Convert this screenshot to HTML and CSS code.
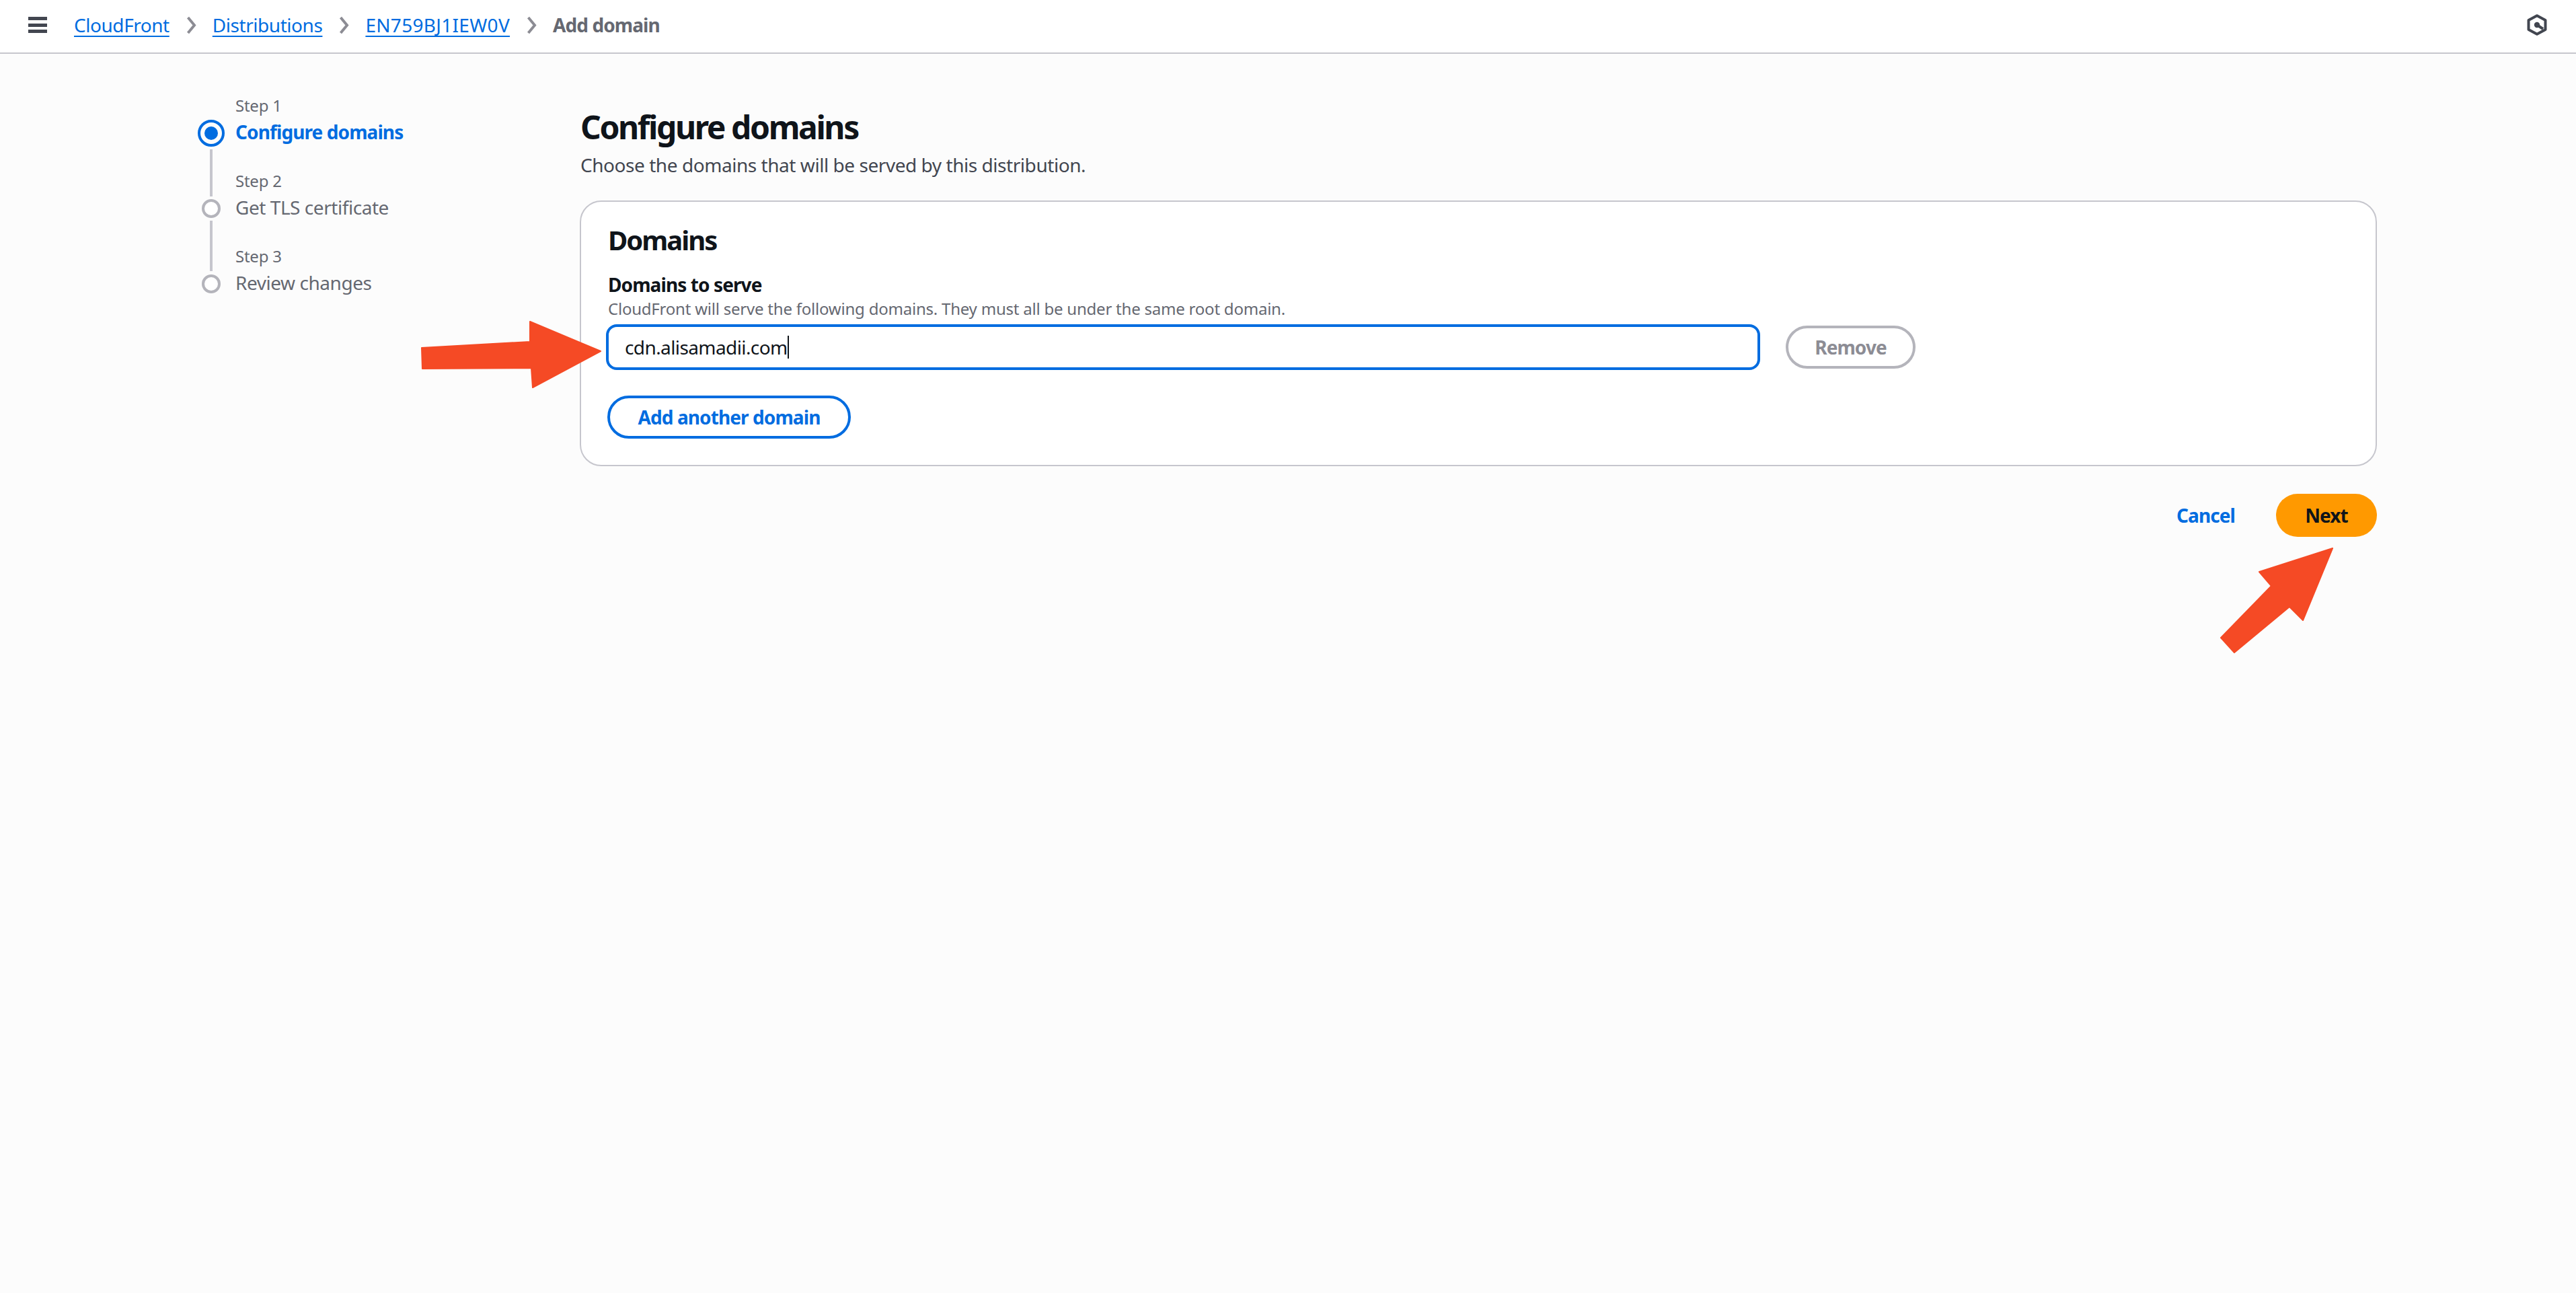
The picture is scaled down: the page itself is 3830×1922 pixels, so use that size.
FILE: index.html
```html
<!DOCTYPE html>
<html lang="en">
<head>
<meta charset="utf-8">
<title>Add domain</title>
<link rel="stylesheet" href="styles.css">
</head>
<body>
<header class="topbar">
  <button class="menu" aria-label="Menu"><span></span><span></span><span></span></button>
  <nav class="crumbs">
    <a href="#">CloudFront</a>
    <svg class="chev" viewBox="0 0 15 27"><path d="M2.500 2l9.500 11.500-9.500 11.500" /></svg>
    <a href="#">Distributions</a>
    <svg class="chev" viewBox="0 0 15 27"><path d="M2.500 2l9.500 11.500-9.500 11.500" /></svg>
    <a class="crumb-id" href="#">EN759BJ1IEW0V</a>
    <svg class="chev" viewBox="0 0 15 27"><path d="M2.500 2l9.500 11.500-9.500 11.500" /></svg>
    <span class="current">Add domain</span>
  </nav>
  <svg class="hex" viewBox="0 0 30 32"><path class="hex-o" d="M15 2.2L27.5 9v14L15 29.8 2.500 23V9z"/><path class="hex-l" d="M15 16l9 6"/><circle class="hex-d" cx="15" cy="16" r="4.200"/></svg>
</header>

<main class="page">
  <ol class="steps">
    <li class="step step-active">
      <span class="step-no">Step 1</span>
      <span class="dot dot-active"></span>
      <span class="step-name step-name-active">Configure domains</span>
    </li>
    <li class="step step-mid">
      <span class="step-no">Step 2</span>
      <span class="dot"></span>
      <span class="step-name">Get TLS certificate</span>
    </li>
    <li class="step step-last">
      <span class="step-no">Step 3</span>
      <span class="dot"></span>
      <span class="step-name">Review changes</span>
    </li>
  </ol>

  <section class="content">
    <h1>Configure domains</h1>
    <p class="sub">Choose the domains that will be served by this distribution.</p>
    <div class="card">
      <h2>Domains</h2>
      <div class="label">Domains to serve</div>
      <div class="hint">CloudFront will serve the following domains. They must all be under the same root domain.</div>
      <div class="row">
        <div class="input"><span class="value">cdn.alisamadii.com</span></div>
        <button class="btn btn-disabled">Remove</button>
      </div>
      <button class="btn btn-normal">Add another domain</button>
    </div>
    <div class="actions">
      <a class="cancel" href="#">Cancel</a>
      <button class="btn btn-primary">Next</button>
    </div>
  </section>
</main>

<svg class="arrow arrow-right" viewBox="0 0 274 102"><path d="M2 41L163 32V2L268 46 167 100 165 71 3 72z"/></svg>
<svg class="arrow arrow-up" viewBox="0 0 172 160"><path d="M168 2L59 37 77 58 2 135 22 157 104 89 124 109z"/></svg>
</body>
</html>
```

FILE: styles.css
```css
* { box-sizing: border-box; }
html, body { margin: 0; height: 100%; }
body {
  min-height: 1922px;
  background: #fcfcfc;
  color: #0f141a;
  font-family: "Noto Sans", "Open Sans", sans-serif;
  font-size: 28px;
  line-height: 40px;
  letter-spacing: -0.45px;
  position: relative;
  overflow: hidden;
}
.topbar {
  height: 80px;
  background: #fff;
  border-bottom: 2px solid #c6c6cd;
  display: flex;
  align-items: center;
  padding: 0 43px 4px 42px;
}
.menu {
  width: 28px;
  height: 24px;
  padding: 0;
  border: 0;
  background: none;
  display: flex;
  flex-direction: column;
  justify-content: space-between;
  margin-right: 40px;
}
.menu span { display: block; height: 5px; background: #424650; }
.crumbs { display: flex; align-items: center; flex: 1; }
.crumbs a { color: #006ce0; text-decoration: underline; text-underline-offset: 5px; text-decoration-thickness: 2px; }
.crumbs .crumb-id { letter-spacing: 0.3px; }
.chev { width: 15px; height: 27px; margin: 0 24px 0 25px; fill: none; stroke: #8c8c94; stroke-width: 4; }
.current { color: #656871; font-weight: 700; letter-spacing: -0.9px; }
.hex { width: 30px; height: 32px; }
.hex-o { fill: none; stroke: #424650; stroke-width: 4; stroke-linejoin: round; }
.hex-l { stroke: #424650; stroke-width: 4; }
.hex-d { fill: #424650; }

.page {
  display: grid;
  grid-template-columns: 568px 2672px;
  padding: 60px 0 0 294px;
}
.steps { list-style: none; margin: 0; padding: 0; }
.step {
  position: relative;
  display: grid;
  grid-template-columns: 40px 1fr;
  grid-template-rows: 38px 40px;
  column-gap: 16px;
  height: 112px;
  align-items: center;
  justify-items: center;
}
.step-no { grid-column: 2; justify-self: start; font-size: 24px; line-height: 32px; color: #656871; padding-bottom: 4px; letter-spacing: -0.25px; }
.step-name { grid-column: 2; justify-self: start; color: #656871; padding-bottom: 4px; }
.step-name-active { color: #006ce0; font-weight: 700; letter-spacing: -0.9px; }
.dot { grid-column: 1; width: 28px; height: 28px; border: 4px solid #b4b4bb; border-radius: 50%; background: #fff; }
.dot-active {
  width: 40px;
  height: 40px;
  border: 4px solid #006ce0;
  padding: 6px;
  background: #006ce0 content-box;
}
.step-active::after, .step-mid::after {
  content: "";
  position: absolute;
  left: 18px;
  width: 4px;
  background: #c6c6cd;
}
.step-active::after { top: 82px; height: 70px; }
.step-mid::after { top: 76px; height: 75px; }

.content { padding-top: 20px; }
h1 { margin: 0 0 5px; font-size: 48px; line-height: 58px; padding-bottom: 2px; font-weight: 700; padding-left: 1px; letter-spacing: -2.4px; }
.sub { margin: 0; padding-left: 1px; color: #424650; }
.card {
  margin-top: 33px;
  height: 395px;
  background: #fff;
  border: 2px solid #c6c6cd;
  border-radius: 32px;
  padding: 33px 40px 0;
}
h2 { margin: 0 0 22px; font-size: 40px; line-height: 48px; font-weight: 700; letter-spacing: -2px; }
.label { font-weight: 700; line-height: 40px; letter-spacing: -0.9px; }
.hint { font-size: 24px; line-height: 32px; color: #656871; letter-spacing: -0.22px; }
.row { display: flex; align-items: center; margin: 7px 0 38px -3px; }
.input {
  width: 1716px;
  height: 68px;
  border: 4px solid #006ce0;
  border-radius: 16px;
  background: #fff;
  padding-left: 24px;
  display: flex;
  align-items: center;
}
.value { border-right: 2px solid #0f141a; line-height: 34px; letter-spacing: -0.6px; }
.btn {
  height: 64px;
  border-radius: 32px;
  font-family: inherit;
  font-size: 28px;
  font-weight: 700;
  line-height: 40px;
  letter-spacing: -0.9px;
  padding: 0;
  background: #fff;
}
.btn-disabled { width: 193px; margin-left: 38px; border: 4px solid #b4b4bb; color: #8c8c94; }
.btn-normal { width: 362px; margin-left: -1px; border: 4px solid #006ce0; color: #006ce0; }
.actions { display: flex; justify-content: flex-end; align-items: center; margin-top: 41px; }
.cancel { color: #006ce0; font-weight: 700; letter-spacing: -0.9px; text-decoration: none; margin-right: 61px; }
.btn-primary { width: 150px; border: 0; background: #ff9900; color: #0f141a; }

.arrow { position: absolute; fill: #f54a25; stroke: #f54a25; stroke-width: 2; stroke-linejoin: round; }
.arrow-right { left: 625px; top: 476px; width: 274px; height: 102px; }
.arrow-up { left: 3300px; top: 813px; width: 172px; height: 160px; }
```
